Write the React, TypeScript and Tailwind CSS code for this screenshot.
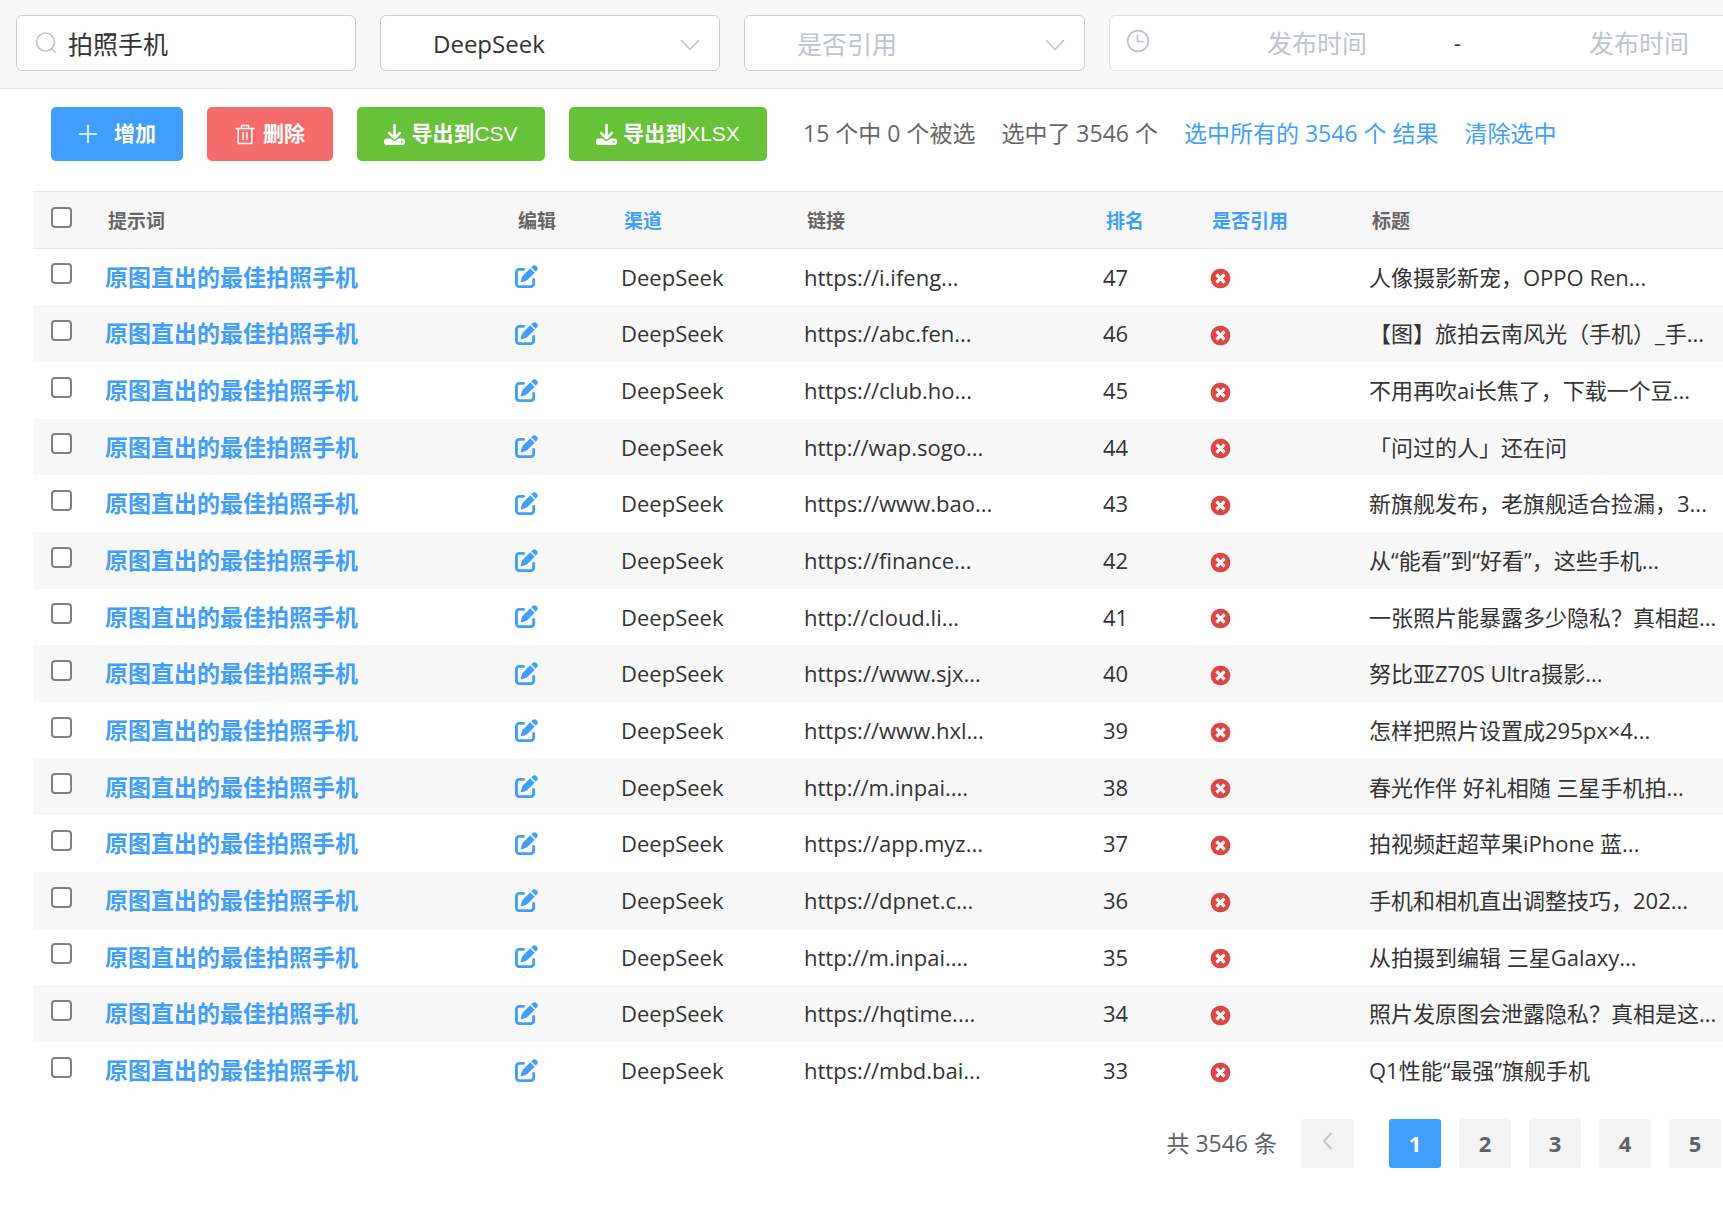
import { useState } from 'react'
import { FaDownload, FaPenToSquare } from 'react-icons/fa6'

const rows = [
  { link: 'https://i.ifeng...', rank: 47, title: '人像摄影新宠，OPPO Ren...' },
  { link: 'https://abc.fen...', rank: 46, title: '【图】旅拍云南风光（手机）_手...' },
  { link: 'https://club.ho...', rank: 45, title: '不用再吹ai长焦了，下载一个豆...' },
  { link: 'http://wap.sogo...', rank: 44, title: '「问过的人」还在问' },
  { link: 'https://www.bao...', rank: 43, title: '新旗舰发布，老旗舰适合捡漏，3...' },
  { link: 'https://finance...', rank: 42, title: '从“能看”到“好看”，这些手机...' },
  { link: 'http://cloud.li...', rank: 41, title: '一张照片能暴露多少隐私？真相超...' },
  { link: 'https://www.sjx...', rank: 40, title: '努比亚Z70S Ultra摄影...' },
  { link: 'https://www.hxl...', rank: 39, title: '怎样把照片设置成295px×4...' },
  { link: 'http://m.inpai....', rank: 38, title: '春光作伴 好礼相随 三星手机拍...' },
  { link: 'https://app.myz...', rank: 37, title: '拍视频赶超苹果iPhone 蓝...' },
  { link: 'https://dpnet.c...', rank: 36, title: '手机和相机直出调整技巧，202...' },
  { link: 'http://m.inpai....', rank: 35, title: '从拍摄到编辑 三星Galaxy...' },
  { link: 'https://hqtime....', rank: 34, title: '照片发原图会泄露隐私？真相是这...' },
  { link: 'https://mbd.bai...', rank: 33, title: 'Q1性能“最强”旗舰手机' },
]

const columns = [
  { label: '提示词' },
  { label: '编辑' },
  { label: '渠道', sortable: true },
  { label: '链接' },
  { label: '排名', sortable: true },
  { label: '是否引用', sortable: true },
  { label: '标题' },
]

const stroke = { fill: 'none', stroke: 'currentColor', strokeLinecap: 'round', strokeLinejoin: 'round' } as const

function SearchIcon() {
  return (
    <svg width="24" height="24" viewBox="0 0 24 24" strokeWidth="1.6" {...stroke}>
      <circle cx="11.5" cy="11" r="9" />
      <path d="M18 18l3.5 3.5" />
    </svg>
  )
}

function ChevronDown() {
  return (
    <svg width="20" height="12" viewBox="0 0 20 12" strokeWidth="1.6" {...stroke}>
      <path d="M1.5 1.5l8.5 9 8.5-9" />
    </svg>
  )
}

function ChevronLeft() {
  return (
    <svg width="11" height="18" viewBox="0 0 11 18" strokeWidth="2" {...stroke}>
      <path d="M9 1.5L2 9l7 7.5" />
    </svg>
  )
}

function ClockIcon() {
  return (
    <svg width="24" height="24" viewBox="0 0 24 24" strokeWidth="1.7" {...stroke}>
      <circle cx="12" cy="12" r="10.3" />
      <path d="M11.5 6v6.5H17" />
    </svg>
  )
}

function PlusIcon() {
  return (
    <svg width="20" height="20" viewBox="0 0 20 20" strokeWidth="1.6" {...stroke}>
      <path d="M10 1.5v17M1.5 10h17" />
    </svg>
  )
}

function TrashIcon() {
  return (
    <svg width="20" height="21" viewBox="0 0 20 21" strokeWidth="1.5" {...stroke}>
      <path d="M1 4.5h18M6.5 4.3V1.5h7v2.8M3.2 4.8v14.7h13.6V4.8M8.2 8.5v7M11.8 8.5v7" />
    </svg>
  )
}

function NoIcon() {
  return (
    <svg width="23" height="23" viewBox="0 0 1792 1792" fill="#dd4646" role="img" aria-label="False">
      <path d="M1277 1122q0-26-19-45l-181-181 181-181q19-19 19-45 0-27-19-46l-90-90q-19-19-46-19-26 0-45 19l-181 181-181-181q-19-19-45-19-27 0-46 19l-90 90q-19 19-19 46 0 26 19 45l181 181-181 181q-19 19-19 45 0 27 19 46l90 90q19 19 46 19 26 0 45-19l181-181 181 181q19 19 45 19 27 0 46-19l90-90q19-19 19-46zm387-226q0 209-103 385.5t-279.5 279.5-385.5 103-385.5-103-279.5-279.5-103-385.5 103-385.5 279.5-279.5 385.5-103 385.5 103 279.5 279.5 103 385.5z" />
    </svg>
  )
}

function Checkbox({ label }: { label: string }) {
  return (
    <input
      type="checkbox"
      aria-label={label}
      className="block size-[21px] appearance-none rounded border-2 border-[#808080] bg-white checked:border-[#409eff] checked:bg-[#409eff]"
    />
  )
}

function Filters() {
  const [query, setQuery] = useState('拍照手机')
  const [channel, setChannel] = useState('DeepSeek')

  return (
    <form className="flex gap-6 border-b border-[#e7e7e7] bg-[#f8f8f8] px-4 pt-[15px] pb-[17px] text-[25px]">
      <label className="flex h-14 w-[340px] shrink-0 items-center gap-2.5 rounded-md border border-[#ccc] bg-white pl-[17px] text-[#c0c4cc]">
        <SearchIcon />
        <input
          type="text"
          aria-label="搜索"
          value={query}
          onChange={(e) => setQuery(e.target.value)}
          className="h-full min-w-0 flex-1 text-[#333] outline-none"
        />
      </label>
      <div className="relative w-[340px] shrink-0 text-[#c0c4cc]">
        <select
          aria-label="渠道"
          value={channel}
          onChange={(e) => setChannel(e.target.value)}
          className="h-14 w-full appearance-none rounded-md border border-[#ccc] bg-white pt-0.5 pl-[52px] text-2xl text-[#333]"
        >
          <option>DeepSeek</option>
        </select>
        <span className="pointer-events-none absolute inset-y-0 right-5 flex items-center pt-1">
          <ChevronDown />
        </span>
      </div>
      <div className="relative w-[341px] shrink-0 text-[#c0c4cc]">
        <select
          aria-label="是否引用"
          defaultValue=""
          className="h-14 w-full appearance-none rounded-md border border-[#ccc] bg-white pt-0.5 pl-[52px]"
        >
          <option value="">是否引用</option>
        </select>
        <span className="pointer-events-none absolute inset-y-0 right-5 flex items-center pt-1">
          <ChevronDown />
        </span>
      </div>
      <div className="flex h-14 w-[700px] shrink-0 items-center rounded-md border border-[#dcdfe6] bg-white pl-4">
        <span className="pb-1 text-[#c0c4cc]">
          <ClockIcon />
        </span>
        <input
          type="text"
          aria-label="开始时间"
          placeholder="发布时间"
          className="ml-[30px] w-[274px] text-center outline-none placeholder:text-[#c0c4cc]"
        />
        <span className="w-12 text-[21px] text-[#303133]">-</span>
        <input
          type="text"
          aria-label="结束时间"
          placeholder="发布时间"
          className="w-[274px] text-center outline-none placeholder:text-[#c0c4cc]"
        />
      </div>
    </form>
  )
}

function Actions() {
  return (
    <div className="flex items-center gap-9 pt-[18px] pl-[51px] whitespace-nowrap">
      <div className="flex gap-6 font-['Liberation_Sans','Noto_Sans_CJK_SC',sans-serif] text-[21px] text-white">
        <button type="button" className="flex h-[54px] w-[132px] items-center justify-center gap-4 rounded-[5px] bg-[#409eff] font-bold">
          <PlusIcon />
          增加
        </button>
        <button type="button" className="flex h-[54px] w-[126px] items-center justify-center gap-2 rounded-[5px] bg-[#f56c6c] font-bold">
          <TrashIcon />
          删除
        </button>
        <button type="button" className="flex h-[54px] w-[188px] items-center justify-center gap-1.5 rounded-[5px] bg-[#67c23a]">
          <FaDownload size={21} />
          <span><b>导出到</b>CSV</span>
        </button>
        <button type="button" className="flex h-[54px] w-[198px] items-center justify-center gap-1.5 rounded-[5px] bg-[#67c23a]">
          <FaDownload size={21} />
          <span><b>导出到</b>XLSX</span>
        </button>
      </div>
      <div className="flex gap-[26px] pb-0.5 text-[23px] text-[#666]">
        <span>15 个中 0 个被选</span>
        <span>选中了 3546 个</span>
        <a href="#all" className="text-[#409eff]">选中所有的 3546 个 结果</a>
        <a href="#clear" className="text-[#409eff]">清除选中</a>
      </div>
    </div>
  )
}

function ResultTable() {
  return (
    <div className="mt-[30px] ml-[33px]">
      <table className="w-full table-fixed text-left whitespace-nowrap text-[#333]">
        <colgroup>
          <col className="w-[60px]" />
          <col className="w-[410px]" />
          <col className="w-[106px]" />
          <col className="w-[183px]" />
          <col className="w-[299px]" />
          <col className="w-[106px]" />
          <col className="w-[160px]" />
          <col />
        </colgroup>
        <thead>
          <tr className="h-[57px] border-y border-[#e7e7e7] bg-[#f8f8f8] text-[19px] text-[#666]">
            <th className="pb-1.5 pl-[18px]">
              <Checkbox label="全选" />
            </th>
            {columns.map((c) => (
              <th key={c.label} className="pt-0.5 pl-[15px] font-bold">
                {c.sortable ? <a href="#sort" className="text-[#409eff]">{c.label}</a> : c.label}
              </th>
            ))}
          </tr>
        </thead>
        <tbody className="text-[22px]">
          {rows.map((r) => (
            <tr key={r.rank} className="h-[57px] even:bg-[#f8f8f8] nth-[3n+1]:h-14">
              <td className="pb-1.5 pl-[18px]">
                <Checkbox label={`选择 ${r.rank}`} />
              </td>
              <th className="pl-3 text-[23px] font-bold">
                <a href="#detail" className="text-[#409eff]">原图直出的最佳拍照手机</a>
              </th>
              <td className="pl-3">
                <a href="#edit" aria-label="编辑" className="block w-6 text-[#409eff]">
                  <FaPenToSquare size={23} />
                </a>
              </td>
              <td className="pl-3">DeepSeek</td>
              <td className="pl-3">{r.link}</td>
              <td className="pl-3">{r.rank}</td>
              <td className="pt-1 pl-3">
                <NoIcon />
              </td>
              <td className="pl-3">{r.title}</td>
            </tr>
          ))}
        </tbody>
      </table>
    </div>
  )
}

function Pagination() {
  const [page, setPage] = useState(1)

  return (
    <nav className="flex items-center justify-end pt-5 pr-0.5 pb-10 text-[23px] text-[#606266]">
      <span className="mr-6">共 3546 条</span>
      <button
        type="button"
        aria-label="上一页"
        disabled={page === 1}
        className="mr-[35px] flex h-[49px] w-[53px] items-center justify-center rounded-[3px] bg-[#f3f3f3] pb-1 text-[#c0c4cc]"
      >
        <ChevronLeft />
      </button>
      <div className="flex gap-[18px] text-[22px] font-bold">
        {[1, 2, 3, 4, 5].map((n) => (
          <button
            key={n}
            type="button"
            onClick={() => setPage(n)}
            className={`h-[49px] w-[52px] rounded-[3px] ${n === page ? 'bg-[#409eff] text-white' : 'bg-[#f3f3f3]'}`}
          >
            {n}
          </button>
        ))}
      </div>
    </nav>
  )
}

export default function App() {
  return (
    <div className="min-h-screen overflow-hidden bg-white font-['Open_Sans','Noto_Sans_CJK_SC',sans-serif] leading-8">
      <Filters />
      <Actions />
      <ResultTable />
      <Pagination />
    </div>
  )
}
